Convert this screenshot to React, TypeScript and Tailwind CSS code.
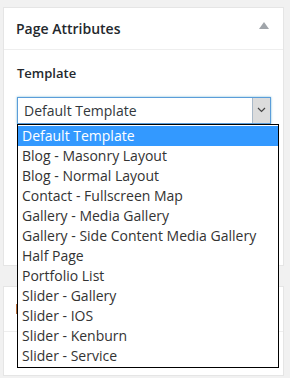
const templates = [
  "Default Template",
  "Blog - Masonry Layout",
  "Blog - Normal Layout",
  "Contact - Fullscreen Map",
  "Gallery - Media Gallery",
  "Gallery - Side Content Media Gallery",
  "Half Page",
  "Portfolio List",
  "Slider - Gallery",
  "Slider - IOS",
  "Slider - Kenburn",
  "Slider - Service",
]

function TemplateSelect() {
  return (
    <div className="relative">
      <div className="flex h-[27px] w-[254px] items-center border border-[#5b9dd9] bg-white shadow-[0_0_2px_rgba(30,140,190,0.6)]">
        <span className="flex-1 pl-[6px] text-[14px] text-[#32373c]">Default Template</span>
        <div className="flex h-full w-[18px] items-center justify-center border-l border-[#a9b9c9] bg-[#dcdcdc]">
          <svg width="9" height="6" viewBox="0 0 9 6">
            <path d="M1 1 L4.5 4.5 L8 1" fill="none" stroke="#444" strokeWidth="1.2" />
          </svg>
        </div>
      </div>

      {/* open option list */}
      <ul className="absolute left-0 top-full z-10 w-[262px] border border-black bg-white py-[1px]">
        {templates.map((t, i) => (
          <li
            key={t}
            className={
              i === 0
                ? "h-[20px] pl-[4px] text-[14px] leading-[20px] bg-[#3399ff] text-white"
                : "h-[20px] pl-[4px] text-[14px] leading-[20px] text-[#333333]"
            }
          >
            {t}
          </li>
        ))}
      </ul>
    </div>
  )
}

export default function App() {
  return (
    <div className="h-[378px] w-[290px] overflow-hidden bg-[#f1f1f1] pl-[3px] pt-[7px] font-['Open_Sans',sans-serif]">
      <div className="h-[259px] w-[281px] border border-[#e5e5e5] bg-white">
        <div className="flex h-[42px] items-center justify-between border-b border-[#eeeeee] pl-[12px] pr-[14px]">
          <h2 className="text-[14px] font-semibold text-[#23282d]">Page Attributes</h2>
          <svg width="10" height="7" viewBox="0 0 10 7" className="-mt-[6px]">
            <path d="M5 0 L10 7 L0 7 Z" fill="#a0a5aa" />
          </svg>
        </div>
        <div className="pl-[13px] pt-[14px]">
          <p className="text-[13px] font-semibold text-[#23282d]">Template</p>
          <div className="mt-[13px]">
            <TemplateSelect />
          </div>
        </div>
      </div>

      <div className="mt-[20px] h-[90px] w-[281px] border border-[#e5e5e5] bg-white">
        <div className="flex h-[45px] items-center border-b border-[#eeeeee] pl-[12px]">
          <span className="h-[10px] w-[3px] bg-[#b86f3c]" />
        </div>
      </div>
    </div>
  )
}
